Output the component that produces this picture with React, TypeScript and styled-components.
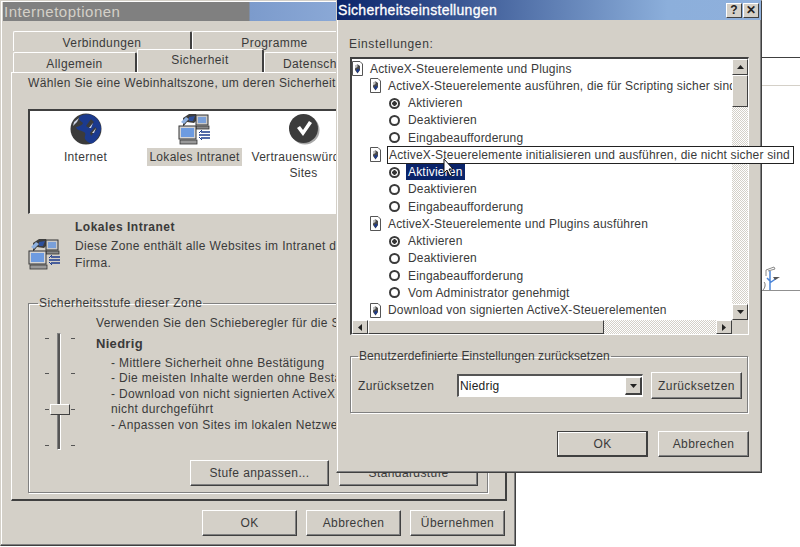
import React from "react";
import styled, { createGlobalStyle } from "styled-components";

const Global = createGlobalStyle`
  html, body { margin: 0; padding: 0; background: #fff; }
  body { width: 800px; height: 547px; overflow: hidden; font-family: "Liberation Sans", Arial, sans-serif; font-size: 12px; color: #3a3a3a; }
`;

const Desktop = styled.div`
  position: relative;
  width: 800px;
  height: 547px;
  overflow: hidden;
  background: #fff;
`;

const DesktopLine = styled.div<{ $top: number; $color: string }>`
  position: absolute;
  left: 760px;
  right: 0;
  top: ${(p) => p.$top}px;
  height: 1px;
  background: ${(p) => p.$color};
`;

const DesktopGlyph = styled.svg`
  position: absolute;
  left: 762px;
  top: 265px;
`;

const Win = styled.div<{ $left: number; $width: number; $height: number }>`
  position: absolute;
  left: ${(p) => p.$left}px;
  top: 0;
  width: ${(p) => p.$width}px;
  height: ${(p) => p.$height}px;
  box-sizing: border-box;
  background: #d4d0c8;
  border: 1px solid #d4d0c8;
  border-right-color: #404040;
  border-bottom-color: #404040;
  box-shadow: inset -1px -1px 0 #808080, inset 1px 1px 0 #fff;
  isolation: isolate;
`;

const InactiveTitle = styled.div`
  margin: 1px 0 0 2px;
  height: 19px;
  display: flex;
  align-items: center;
  padding-left: 1px;
  background: linear-gradient(90deg, #808080 0, #808080 246px, #7c9bcc 247px, #8aa8d6 332px);
  color: #d4d0c8;
  font-size: 15px;
  letter-spacing: 0.5px;
  white-space: nowrap;
`;

const TabArea = styled.div`
  margin: 10px 0 0 12px;
`;

const TabRow = styled.div<{ $back?: boolean }>`
  display: flex;
  align-items: flex-end;
  height: ${(p) => (p.$back ? 20 : 21)}px;
  position: relative;
`;

const Tab = styled.div<{ $width: number; $active?: boolean }>`
  box-sizing: border-box;
  width: ${(p) => p.$width}px;
  height: ${(p) => (p.$active ? 23 : 20)}px;
  display: flex;
  justify-content: center;
  align-items: ${(p) => (p.$active ? "flex-start" : "center")};
  padding-top: ${(p) => (p.$active ? 3 : 2)}px;
  border: 1px solid #fff;
  border-bottom: none;
  border-right: 2px solid #404040;
  border-radius: 2px 2px 0 0;
  white-space: nowrap;
  letter-spacing: 0.4px;
  background: #d4d0c8;
  position: relative;
  z-index: ${(p) => (p.$active ? 2 : 1)};
`;

const TabPanel = styled.div`
  box-sizing: border-box;
  width: 496px;
  height: 429px;
  margin-left: -2px;
  border: 1px solid #fff;
  border-right: 2px solid #404040;
  border-bottom: 2px solid #404040;
  padding: 3px 0 0 16px;
  display: flex;
  flex-direction: column;
`;

const Line = styled.div`
  white-space: nowrap;
  letter-spacing: 0.35px;
  line-height: 15.5px;
`;

const Intro = styled(Line)`
  height: 30px;
`;

const InfoLine = styled(Line)`
  line-height: 16.5px;
`;

const ZoneList = styled.div`
  box-sizing: border-box;
  width: 460px;
  height: 105px;
  margin-top: 3px;
  display: flex;
  background: #fff;
  border: 1px solid #fff;
  border-top: 2px solid #404040;
  border-left: 2px solid #404040;
  padding: 2px 0 0 1px;
`;

const Zone = styled.div`
  width: 109px;
  flex: none;
  display: flex;
  flex-direction: column;
  align-items: center;
  text-align: center;
  letter-spacing: 0.3px;
  line-height: 16px;
`;

const ZoneCaption = styled.div<{ $selected?: boolean }>`
  margin-top: 3px;
  padding: 1px 2px;
  background: ${(p) => (p.$selected ? "#d4d0c8" : "transparent")};
  width: ${(p) => (p.$selected ? "auto" : "104px")};
  white-space: ${(p) => (p.$selected ? "nowrap" : "normal")};
`;

const ZoneInfo = styled.div`
  display: grid;
  grid-template-columns: 47px 1fr;
  margin-top: 6px;
  height: 77px;
`;

const InfoIcon = styled.div`
  padding-top: 18px;
`;

const InfoTitle = styled.div`
  font-weight: 700;
  letter-spacing: 0.5px;
  line-height: 15px;
  margin-bottom: 3px;
`;

const Group = styled.fieldset<{ $width: number; $height: number }>`
  box-sizing: border-box;
  width: ${(p) => p.$width}px;
  height: ${(p) => p.$height}px;
  margin: 0;
  border: 1px solid #808080;
  box-shadow: 1px 1px 0 #fff, inset 1px 1px 0 #fff;
  border-radius: 0;
  padding: 0;
  position: relative;
`;

const GroupLegend = styled.legend`
  margin-left: 9px;
  padding: 0 1px;
  white-space: nowrap;
  letter-spacing: 0.4px;
  line-height: 13px;
`;

const ResetLegend = styled(GroupLegend)`
  margin-left: 7px;
  letter-spacing: 0.09px;
`;

const ZoneGroupBody = styled.div`
  display: grid;
  grid-template-columns: 67px 1fr;
  padding-top: 3px;
`;

const ZoneGroupText = styled.div`
  padding-top: 3px;
`;

const SliderBox = styled.div`
  position: relative;
  height: 125px;
`;

const SliderTrack = styled.div`
  position: absolute;
  left: 28px;
  top: 20px;
  width: 2px;
  height: 115px;
  background: #555;
  border: 1px solid;
  border-color: #808080 #fff #fff #808080;
`;

const SliderThumb = styled.div`
  position: absolute;
  left: 21px;
  top: 91px;
  width: 20px;
  height: 11px;
  box-sizing: border-box;
  background: #d4d0c8;
  border: 1px solid;
  border-color: #fff #404040 #404040 #fff;
`;

const SliderTick = styled.div<{ $left: number; $top: number }>`
  position: absolute;
  left: ${(p) => p.$left}px;
  top: ${(p) => p.$top}px;
  width: 4px;
  height: 1px;
  background: #555;
`;

const BoldLevel = styled.div`
  font-weight: 700;
  font-size: 13px;
  letter-spacing: 0.3px;
  margin: 4px 0 4px;
  line-height: 16px;
`;

const Bullets = styled.div`
  padding-left: 15px;
`;

const GroupButtons = styled.div`
  display: flex;
  gap: 10px;
  padding-left: 161px;
  margin-top: 22px;
`;

const Button = styled.button<{ $width: number; $height?: number; $default?: boolean }>`
  box-sizing: border-box;
  width: ${(p) => p.$width}px;
  height: ${(p) => p.$height ?? 26}px;
  padding: 0;
  flex: none;
  font: inherit;
  color: inherit;
  letter-spacing: 0.4px;
  white-space: nowrap;
  background: #d4d0c8;
  border: 1px solid;
  border-color: ${(p) => (p.$default ? "#404040" : "#fff #404040 #404040 #fff")};
  box-shadow: ${(p) => (p.$default ? "inset -1px -1px 0 #404040, inset 1px 1px 0 #fff" : "inset -1px -1px 0 #808080")};
`;

const Footer = styled.div<{ $gap: number; $pad: number }>`
  display: flex;
  justify-content: flex-end;
  gap: ${(p) => p.$gap}px;
  padding-right: ${(p) => p.$pad}px;
`;

const LeftFooter = styled(Footer)`
  margin-top: 9px;
`;

const ActiveTitle = styled.div`
  margin: -1px 0 0 0;
  height: 20px;
  display: flex;
  align-items: center;
  justify-content: space-between;
  padding: 0 2px 0 1px;
  background: linear-gradient(90deg, #0a246a 0, #8cafdb 78%, #8fb0dc 100%);
  color: #fff;
  font-size: 14px;
  letter-spacing: 0.3px;
  font-weight: 400;
  -webkit-text-stroke: 0.3px #fff;
`;

const TitleButtons = styled.div`
  display: flex;
  gap: 1px;
  -webkit-text-stroke: 0;
`;

const TitleButton = styled.div`
  box-sizing: border-box;
  width: 16px;
  height: 15px;
  background: #d4d0c8;
  color: #222;
  font-size: 12px;
  font-weight: 700;
  line-height: 13px;
  text-align: center;
  letter-spacing: 0;
  border: 1px solid;
  border-color: #fff #404040 #404040 #fff;
`;

const DialogBody = styled.div`
  padding: 17px 12px 0 12px;
  position: relative;
`;

const FieldLabel = styled.div`
  letter-spacing: 0.65px;
  line-height: 15px;
  height: 15px;
`;

const ListFrame = styled.div`
  box-sizing: border-box;
  margin: 5px 0 0 1px;
  width: 399px;
  height: 278px;
  background: #fff;
  border: 1px solid #fff;
  border-top: 2px solid #404040;
  border-left: 2px solid #404040;
  display: grid;
  grid-template-columns: 380px 16px;
  grid-template-rows: 261px 14px;
  overflow: hidden;
  position: relative;
`;

const ListRows = styled.div`
  overflow: hidden;
  padding-top: 1px;
`;

const Row = styled.div<{ $indent: number }>`
  height: 17.25px;
  display: flex;
  align-items: center;
  padding-left: ${(p) => p.$indent}px;
  white-space: nowrap;
  letter-spacing: 0.18px;
  gap: 5px;
`;

const RowText = styled.span<{ $selected?: boolean }>`
  background: ${(p) => (p.$selected ? "#0a246a" : "transparent")};
  color: ${(p) => (p.$selected ? "#fff" : "inherit")};
  padding: 1px 2px;
`;

const Radio = styled.span<{ $on?: boolean }>`
  box-sizing: border-box;
  flex: none;
  width: 11px;
  height: 11px;
  margin-right: 1px;
  border-radius: 50%;
  border: 2px solid #3a3a3a;
  background: ${(p) => (p.$on ? "radial-gradient(circle, #333 0 2px, #fff 2.5px)" : "#fff")};
`;

const checker = `repeating-conic-gradient(#d4d0c8 0 25%, #fff 0 50%) 0 0 / 2px 2px`;

const VTrack = styled.div`
  display: flex;
  flex-direction: column;
  background: ${checker};
`;

const HTrack = styled.div`
  display: flex;
  background: ${checker};
`;

const ScrollPart = styled.div<{ $w?: number; $h?: number }>`
  box-sizing: border-box;
  flex: none;
  width: ${(p) => (p.$w ? `${p.$w}px` : "100%")};
  height: ${(p) => (p.$h ? `${p.$h}px` : "100%")};
  background: #d4d0c8;
  border: 1px solid;
  border-color: #fff #404040 #404040 #fff;
  display: flex;
  align-items: center;
  justify-content: center;
`;

const Filler = styled.div`
  flex: 1;
`;

const Corner = styled.div`
  background: #d4d0c8;
`;

const Tip = styled.div`
  position: absolute;
  left: 50px;
  top: 126px;
  width: 407px;
  height: 18px;
  box-sizing: border-box;
  background: #fff;
  border: 1px solid #222;
  padding-left: 1px;
  display: flex;
  align-items: center;
  white-space: nowrap;
  letter-spacing: 0.18px;
  z-index: 3;
`;

const Pointer = styled.svg`
  position: absolute;
  left: 106px;
  top: 138px;
  z-index: 4;
`;

const ResetGroup = styled(Group)`
  margin-top: 15px;
  margin-left: 1px;
`;

const ResetRow = styled.div`
  display: flex;
  align-items: center;
  padding: 9px 0 0 7px;
`;

const ResetLabel = styled.div`
  width: 99px;
  flex: none;
  letter-spacing: 0.35px;
`;

const Combo = styled.div`
  box-sizing: border-box;
  width: 186px;
  height: 23px;
  background: #fff;
  border: 1px solid #fff;
  border-top: 2px solid #555;
  border-left: 2px solid #555;
  display: flex;
  align-items: center;
  padding-left: 1px;
  margin-right: 8px;
  letter-spacing: 0.2px;
  color: #222;
`;

const ComboArrow = styled(ScrollPart)`
  margin-left: auto;
  border-width: 1px 2px 2px 1px;
`;

const DialogFooter = styled(Footer)`
  margin-top: 18px;
`;

const DocShield = () => (
  <svg width="11" height="15" viewBox="0 0 11 15" style={{ flex: "none" }}>
    <path d="M0.5 0.5H8L10.5 3V14.5H0.5Z" fill="#fff" stroke="#555" />
    <path d="M3 5L5.5 3.2L8 5V9L5.5 12.5L3 9Z" fill="#4a4a4a" />
    <path d="M3 5L5.5 3.2V6L3 7.5Z" fill="#c4c4c4" />
    <path d="M4 9.3L6 7.5L7.7 9L5.5 12Z" fill="#1c3a8c" />
  </svg>
);

const UpArrow = () => (
  <svg width="7" height="4" viewBox="0 0 7 4"><path d="M3.5 0L7 4H0Z" fill="#222" /></svg>
);
const DownArrow = () => (
  <svg width="7" height="4" viewBox="0 0 7 4"><path d="M0 0H7L3.5 4Z" fill="#222" /></svg>
);
const LeftArrow = () => (
  <svg width="4" height="7" viewBox="0 0 4 7"><path d="M4 0V7L0 3.5Z" fill="#222" /></svg>
);
const RightArrow = () => (
  <svg width="4" height="7" viewBox="0 0 4 7"><path d="M0 0V7L4 3.5Z" fill="#222" /></svg>
);

const Globe = () => (
  <svg width="32" height="32" viewBox="0 0 32 32">
    <circle cx="16" cy="16" r="15.5" fill="#3b3b3b" />
    <path d="M9 4C13 1 20 0 25 4C29 7 31 12 31 16C30 22 27 27 23 30C20 31 17 29 15 26C14 23 17 21 14 19C11 17 7 18 6 14C9 13 12 13 13 10C11 8 8 7 9 4Z" fill="#1b3a8e" />
    <path d="M21 6L24 9L19 15L16 13ZM25 14L27 16L21 23L20 20Z" fill="#3b3b3b" />
    <path d="M4 9L9 5L7 9L3 13ZM19 15L23 10L21 15ZM22 20L26 15L24 20Z" fill="#cfd6e6" />
  </svg>
);

const Intranet = () => (
  <svg width="33" height="32" viewBox="0 0 33 32">
    <path d="M5 5L11 1H18L20 6L16 10L9 9L5 14Z" fill="#3d3d3d" />
    <path d="M3 9L8 4L11 6L6 11Z" fill="#8fb1e0" />
    <path d="M11 4L17 3L15 8L11 8Z" fill="#2c4f9c" />
    <rect x="18" y="2" width="12" height="10" fill="#c9c9c9" stroke="#333" />
    <rect x="20" y="4" width="8" height="6" fill="#7aa0da" />
    <rect x="18" y="13" width="13" height="3" fill="#888" stroke="#333" strokeWidth="0.8" />
    <rect x="1" y="13" width="17" height="13" fill="#d5d5d5" stroke="#333" />
    <rect x="3" y="15" width="13" height="9" fill="#6d9be0" />
    <rect x="2" y="27" width="17" height="4" fill="#999" stroke="#333" strokeWidth="0.8" />
    <path d="M23 19H32M21 22H32M23 25H32" stroke="#1c3a8c" strokeWidth="1.3" />
    <path d="M24 17L21 20M24 27L21 24" stroke="#1c3a8c" strokeWidth="1" />
  </svg>
);

const Trusted = () => (
  <svg width="32" height="32" viewBox="0 0 32 32">
    <circle cx="17" cy="17" r="14.5" fill="#a8a8a8" />
    <circle cx="15.5" cy="15.5" r="14.5" fill="#3c3c3c" />
    <path d="M9 15L12 13L15 17L21 8L24 10L15 23Z" fill="#fff" />
  </svg>
);

type Item = { t: "h0" | "h1" | "r"; text: string; on?: boolean; sel?: boolean };
const items: Item[] = [
  { t: "h0", text: "ActiveX-Steuerelemente und Plugins" },
  { t: "h1", text: "ActiveX-Steuerelemente ausführen, die für Scripting sicher sind" },
  { t: "r", text: "Aktivieren", on: true },
  { t: "r", text: "Deaktivieren" },
  { t: "r", text: "Eingabeaufforderung" },
  { t: "h1", text: "ActiveX-Steuerelemente initialisieren und ausführen, die nicht sicher sind" },
  { t: "r", text: "Aktivieren", on: true, sel: true },
  { t: "r", text: "Deaktivieren" },
  { t: "r", text: "Eingabeaufforderung" },
  { t: "h1", text: "ActiveX-Steuerelemente und Plugins ausführen" },
  { t: "r", text: "Aktivieren", on: true },
  { t: "r", text: "Deaktivieren" },
  { t: "r", text: "Eingabeaufforderung" },
  { t: "r", text: "Vom Administrator genehmigt" },
  { t: "h1", text: "Download von signierten ActiveX-Steuerelementen" },
];

const ticks = [3, 38, 74, 110];

export default function App() {
  return (
    <Desktop>
      <Global />
      <DesktopLine $top={57} $color="#404040" />
      <DesktopLine $top={85} $color="#d4d0c8" />
      <DesktopLine $top={290} $color="#909090" />
      <DesktopGlyph width="22" height="26" viewBox="0 0 22 26">
        <path d="M4 11V5L12 2L13 4L6 6" fill="none" stroke="#8a8a8a" />
        <path d="M8 6V25M5 13L9 17L15 13" fill="none" stroke="#4d86d8" strokeWidth="1.5" />
        <path d="M11 12H18L13 15Z" fill="#555" />
        <path d="M2 17C4 19 3 23 1 25" fill="none" stroke="#777" />
      </DesktopGlyph>

      <Win $left={0} $width={516} $height={546}>
        <InactiveTitle>Internetoptionen</InactiveTitle>
        <TabArea>
          <TabRow $back>
            <Tab $width={179}>Verbindungen</Tab>
            <Tab $width={166}>Programme</Tab>
          </TabRow>
          <TabRow>
            <Tab $width={124}>Allgemein</Tab>
            <Tab $width={127} $active>Sicherheit</Tab>
            <Tab $width={110}>Datenschutz</Tab>
          </TabRow>
          <TabPanel>
            <Intro>Wählen Sie eine Webinhaltszone, um deren Sicherheitseinstellungen festzulegen.</Intro>
            <ZoneList>
              <Zone>
                <Globe />
                <ZoneCaption>Internet</ZoneCaption>
              </Zone>
              <Zone>
                <Intranet />
                <ZoneCaption $selected>Lokales Intranet</ZoneCaption>
              </Zone>
              <Zone>
                <Trusted />
                <ZoneCaption>Vertrauenswürdige Sites</ZoneCaption>
              </Zone>
            </ZoneList>
            <ZoneInfo>
              <InfoIcon><Intranet /></InfoIcon>
              <div>
                <InfoTitle>Lokales Intranet</InfoTitle>
                <InfoLine>Diese Zone enthält alle Websites im Intranet der</InfoLine>
                <InfoLine>Firma.</InfoLine>
              </div>
            </ZoneInfo>
            <Group $width={460} $height={196}>
              <GroupLegend>Sicherheitsstufe dieser Zone</GroupLegend>
              <ZoneGroupBody>
                <SliderBox>
                  <SliderTrack />
                  {ticks.map((y) => (
                    <React.Fragment key={y}>
                      <SliderTick $left={16} $top={y + 22} />
                      <SliderTick $left={42} $top={y + 22} />
                    </React.Fragment>
                  ))}
                  <SliderThumb />
                </SliderBox>
                <ZoneGroupText>
                  <Line>Verwenden Sie den Schieberegler für die Sicherheitsstufe.</Line>
                  <BoldLevel>Niedrig</BoldLevel>
                  <Bullets>
                    <Line>- Mittlere Sicherheit ohne Bestätigung</Line>
                    <Line>- Die meisten Inhalte werden ohne Bestätigung</Line>
                    <Line>- Download von nicht signierten ActiveX-Steuerelementen</Line>
                    <Line>nicht durchgeführt</Line>
                    <Line>- Anpassen von Sites im lokalen Netzwerk</Line>
                  </Bullets>
                </ZoneGroupText>
              </ZoneGroupBody>
              <GroupButtons>
                <Button $width={139}>Stufe anpassen...</Button>
                <Button $width={139}>Standardstufe</Button>
              </GroupButtons>
            </Group>
          </TabPanel>
          <LeftFooter $gap={9} $pad={10}>
            <Button $width={95}>OK</Button>
            <Button $width={95}>Abbrechen</Button>
            <Button $width={95}>Übernehmen</Button>
          </LeftFooter>
        </TabArea>
      </Win>

      <Win $left={336} $width={426} $height={473}>
        <ActiveTitle>
          Sicherheitseinstellungen
          <TitleButtons>
            <TitleButton>?</TitleButton>
            <TitleButton>✕</TitleButton>
          </TitleButtons>
        </ActiveTitle>
        <DialogBody>
          <FieldLabel>Einstellungen:</FieldLabel>
          <ListFrame>
            <ListRows>
              {items.map((it, i) => (
                <Row key={i} $indent={it.t === "h0" ? 0 : it.t === "h1" ? 18 : 37}>
                  {it.t === "r" ? <Radio $on={it.on} /> : <DocShield />}
                  <RowText $selected={it.sel}>{it.text}</RowText>
                </Row>
              ))}
            </ListRows>
            <VTrack>
              <ScrollPart $h={16}><UpArrow /></ScrollPart>
              <ScrollPart $h={32} />
              <Filler />
              <ScrollPart $h={16}><DownArrow /></ScrollPart>
            </VTrack>
            <HTrack>
              <ScrollPart $w={16}><LeftArrow /></ScrollPart>
              <ScrollPart $w={236} />
              <Filler />
              <ScrollPart $w={16}><RightArrow /></ScrollPart>
            </HTrack>
            <Corner />
          </ListFrame>
          <Tip>ActiveX-Steuerelemente initialisieren und ausführen, die nicht sicher sind</Tip>
          <Pointer width="12" height="19" viewBox="0 0 12 19">
            <path d="M1 1V15L4 12L7 18L9 17L6 11H10Z" fill="#fff" stroke="#111" />
          </Pointer>
          <ResetGroup $width={398} $height={63}>
            <ResetLegend>Benutzerdefinierte Einstellungen zurücksetzen</ResetLegend>
            <ResetRow>
              <ResetLabel>Zurücksetzen</ResetLabel>
              <Combo>
                Niedrig
                <ComboArrow $w={17} $h={18}><DownArrow /></ComboArrow>
              </Combo>
              <Button $width={91} $height={27}>Zurücksetzen</Button>
            </ResetRow>
          </ResetGroup>
          <DialogFooter $gap={10} $pad={0}>
            <Button $width={91} $default>OK</Button>
            <Button $width={91}>Abbrechen</Button>
          </DialogFooter>
        </DialogBody>
      </Win>
    </Desktop>
  );
}
